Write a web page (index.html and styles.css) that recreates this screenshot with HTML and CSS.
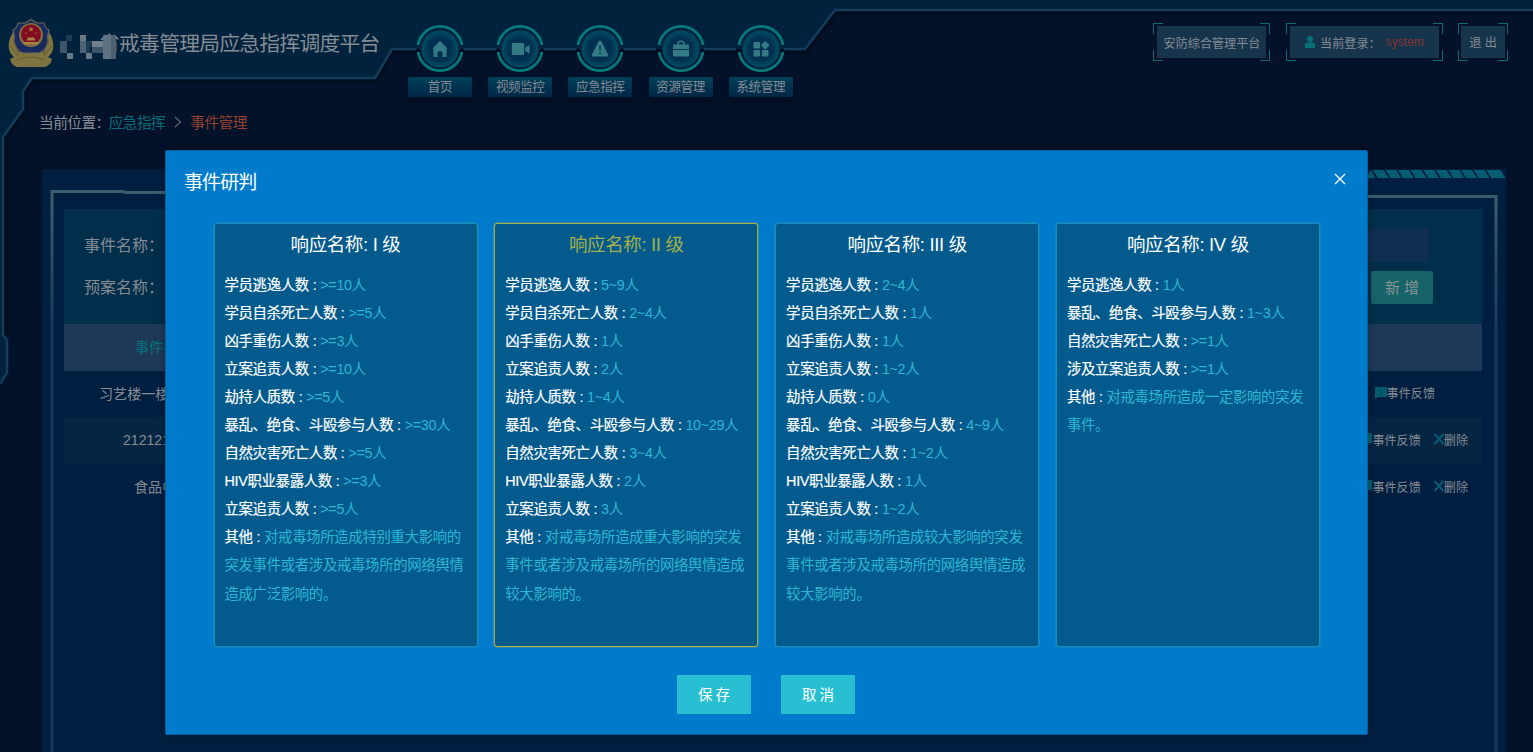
FILE: index.html
```
<!DOCTYPE html>
<html lang="zh-CN">
<head>
<meta charset="utf-8">
<title>事件管理</title>
<link rel="stylesheet" href="styles.css">
</head>
<body>
<div class="page">
  <svg class="backdrop" viewBox="0 0 1533 400" width="1533" height="400">
    <path class="backdrop-fill" d="M0 0H1533V10H835L805 49H392L375 78H32L23 91V109L3 137V335L7 340V373L0 384Z"/>
    <path class="backdrop-shadow" d="M1533 13H837L807 52H394L377 81H34L26 92V110L6 138V334"/>
    <path class="backdrop-line" d="M1533 10H835L805 49H784M736 49H704M656 49H624M576 49H544M496 49H464M416 49H392L375 78H32L23 91V109L3 137V335L7 340V373L0 384"/>
  </svg>

  <header class="header">
    <div class="brand">
      <svg class="emblem" viewBox="0 0 46 50" width="46" height="50">
        <path d="M5 14C-1 24 -1 34 6 39L2 41Q3 47 9 49H37Q43 47 44 41L40 39C47 34 47 24 41 14L36 34H10Z" fill="#7f7440"/>
        <path d="M23 1.500L29 5H36Q37 10 41 12Q39 18 40 23Q39 32 31 35H15Q7 32 6 23Q7 18 5 12Q9 10 10 5H17Z" fill="#172a60" stroke="#6a6858" stroke-width="1.200"/>
        <circle cx="23" cy="17" r="12" fill="#81703b"/>
        <circle cx="23" cy="16.500" r="10" fill="#840c20"/>
        <path d="M23 9l.8 1.500h1.700l-1.300 1.200.4 1.800-1.600-.9-1.600.9.4-1.800-1.300-1.200h1.700zM17.500 14.500h1.300v1.300h-1.300zM27.200 14.500h1.300v1.300h-1.300zM20 19.500h6l1.500 3h-9zM15.500 24h15v2.500h-15z" fill="#a18443"/>
        <path d="M5 21L11 36M41 21L35 36M2.500 28L10 38M43.500 28L36 38M9 42Q23 36 37 42" fill="none" stroke="#635b32" stroke-width="1"/>
      </svg>
      <div class="brand-title"><span class="masked">省<svg class="mosaic" viewBox="0 0 56 24" width="56" height="24">
        <path fill="#1d3d53" d="M6 0h6v6H6zM26 6h6v6h-6zM24 12h6v6h-6z"/>
        <path fill="#3d566a" d="M0 6h7v12H0zM32 12h12v6H32z"/>
        <path fill="#687985" d="M7 18h6v6H7zM26 18h6v6h-6zM20 0h6v6h-6z"/>
        <path fill="#4c6274" d="M20 6h6v12h-6zM50 0h6v24h-6z"/>
        <path fill="#71808c" d="M32 6h12v6H32z"/>
        <path fill="#5f7180" d="M43 0h8v24h-8z"/>
      </svg></span>戒毒管理局应急指挥调度平台</div>
    </div>
    <nav class="nav">
      <a class="nav-item"><svg class="nav-icon" viewBox="0 0 48 48"><use href="#ring"/><path d="M24 16L31.500 23.500H30.500V32H26.500V26.500H21.500V32H17.500V23.500H16.500Z"/></svg><span>首页</span></a>
      <a class="nav-item"><svg class="nav-icon" viewBox="0 0 48 48"><use href="#ring"/><path d="M17 18h10a1.200 1.200 0 0 1 1.200 1.200v9.600a1.200 1.200 0 0 1-1.200 1.200H17a1.200 1.200 0 0 1-1.200-1.200v-9.600A1.200 1.200 0 0 1 17 18zM29.200 22.500L33.500 20v8.500L29.200 26z"/></svg><span>视频监控</span></a>
      <a class="nav-item"><svg class="nav-icon" viewBox="0 0 48 48"><use href="#ring"/><path fill-rule="evenodd" d="M22.600 16.500q1.400-1.800 2.800 0L32 29.500q.8 2-1.200 2H17.200q-2 0-1.200-2zM23.200 20.500l.3 5.500h1l.3-5.500zM23.200 27.500v1.700h1.700v-1.700z"/></svg><span>应急指挥</span></a>
      <a class="nav-item"><svg class="nav-icon" viewBox="0 0 48 48"><use href="#ring"/><path fill-rule="evenodd" d="M20 19.500q0-4 4-4t4 4h3q1 0 1 1V24H16v-3.500q0-1 1-1zm1.500 0h5q0-2.500-2.500-2.500t-2.500 2.500zM16 25h16v5.500q0 1-1 1H17q-1 0-1-1z"/></svg><span>资源管理</span></a>
      <a class="nav-item"><svg class="nav-icon" viewBox="0 0 48 48"><use href="#ring"/><path d="M17.500 17h4.500q1 0 1 1v4.500q0 1-1 1h-4.500q-1 0-1-1V18q0-1 1-1zM17.500 25H22q1 0 1 1v4.500q0 1-1 1h-4.500q-1 0-1-1V26q0-1 1-1zM26 25h4.500q1 0 1 1v4.500q0 1-1 1H26q-1 0-1-1V26q0-1 1-1zM27.500 16.500q.7-.7 1.400 0l3 3q.7.7 0 1.400l-3 3q-.7.7-1.400 0l-3-3q-.7-.7 0-1.400z"/></svg><span>系统管理</span></a>
    </nav>
    <div class="tools">
      <div class="tool tool-platform"><i class="corners"></i><span>安防综合管理平台</span></div>
      <div class="tool tool-user"><i class="corners"></i><span><svg class="user-icon" viewBox="0 0 10 12" width="10" height="12"><circle cx="5" cy="3" r="3"/><path d="M0 12V9q0-2.500 3-2.500h4q3 0 3 2.500v3z"/></svg>当前登录：<em>system</em></span></div>
      <div class="tool tool-exit"><i class="corners"></i><span>退 出</span></div>
    </div>
  </header>

  <div class="crumbs">当前位置：<a>应急指挥</a><svg viewBox="0 0 8 12" width="8" height="12"><path d="M1 1L6.500 6L1 11"/></svg><b>事件管理</b></div>

  <main class="panel">
    <svg class="stripes" viewBox="0 0 140 8" width="140" height="8">
      <path d="M0 8L5 0L9 8ZM7 0h10.500l5 8h-10.500zM19.600 0h10.500l5 8h-10.500zM32.200 0h10.500l5 8h-10.500zM44.800 0h10.500l5 8h-10.500zM57.400 0h10.500l5 8h-10.500zM70 0h10.500l5 8h-10.500zM82.600 0h10.500l5 8h-10.500zM95.200 0h10.500l5 8h-10.500zM107.800 0h10.500l5 8h-10.500zM120.400 0h14l5 8h-14z"/>
    </svg>
    <svg class="frame" viewBox="0 0 1448 562" width="1448" height="562">
      <defs><linearGradient id="edge" gradientUnits="userSpaceOnUse" x1="0" y1="0" x2="0" y2="140"><stop offset="0" stop-color="#38616f"/><stop offset="1" stop-color="#123b57"/></linearGradient></defs>
      <path d="M2 562V1.500H72L76 2.500H400L410 6.500H1446V562"/>
    </svg>
    <section class="search">
      <div class="search-row"><label>事件名称：</label><div class="field"></div></div>
      <div class="search-row"><label>预案名称：</label><button class="add">新 增</button></div>
    </section>
    <div class="table">
      <div class="row row-head"><span class="cell cell-head">事件名</span></div>
      <div class="row row-first"><span class="cell cell-a">习艺楼一楼</span><span class="ops"><svg class="note" viewBox="0 0 12 12"><use href="#note"/></svg>事件反馈</span></div>
      <div class="row row-alt"><span class="cell cell-b">212121</span><span class="ops"><svg class="note" viewBox="0 0 12 12"><use href="#note"/></svg>事件反馈<svg class="cross" viewBox="0 0 10 12"><use href="#cross"/></svg>删除</span></div>
      <div class="row"><span class="cell cell-c">食品中</span><span class="ops"><svg class="note" viewBox="0 0 12 12"><use href="#note"/></svg>事件反馈<svg class="cross" viewBox="0 0 10 12"><use href="#cross"/></svg>删除</span></div>
    </div>
  </main>
</div>

<div class="modal">
  <div class="modal-head"><h2>事件研判</h2><svg viewBox="0 0 12 12" width="12" height="12"><path d="M1 1L11 11M11 1L1 11"/></svg></div>
  <div class="cards">
    <section class="card">
      <h3>响应名称: I 级</h3>
      <p><b>学员逃逸人数 : </b>&gt;=10人</p>
      <p><b>学员自杀死亡人数 : </b>&gt;=5人</p>
      <p><b>凶手重伤人数 : </b>&gt;=3人</p>
      <p><b>立案追责人数 : </b>&gt;=10人</p>
      <p><b>劫持人质数 : </b>&gt;=5人</p>
      <p><b>暴乱、绝食、斗殴参与人数 : </b>&gt;=30人</p>
      <p><b>自然灾害死亡人数 : </b>&gt;=5人</p>
      <p><b>HIV职业暴露人数 : </b>&gt;=3人</p>
      <p><b>立案追责人数 : </b>&gt;=5人</p>
      <p><b>其他 : </b>对戒毒场所造成特别重大影响的突发事件或者涉及戒毒场所的网络舆情造成广泛影响的。</p>
    </section>
    <section class="card card-active">
      <h3>响应名称: II 级</h3>
      <p><b>学员逃逸人数 : </b>5~9人</p>
      <p><b>学员自杀死亡人数 : </b>2~4人</p>
      <p><b>凶手重伤人数 : </b>1人</p>
      <p><b>立案追责人数 : </b>2人</p>
      <p><b>劫持人质数 : </b>1~4人</p>
      <p><b>暴乱、绝食、斗殴参与人数 : </b>10~29人</p>
      <p><b>自然灾害死亡人数 : </b>3~4人</p>
      <p><b>HIV职业暴露人数 : </b>2人</p>
      <p><b>立案追责人数 : </b>3人</p>
      <p><b>其他 : </b>对戒毒场所造成重大影响的突发事件或者涉及戒毒场所的网络舆情造成较大影响的。</p>
    </section>
    <section class="card">
      <h3>响应名称: III 级</h3>
      <p><b>学员逃逸人数 : </b>2~4人</p>
      <p><b>学员自杀死亡人数 : </b>1人</p>
      <p><b>凶手重伤人数 : </b>1人</p>
      <p><b>立案追责人数 : </b>1~2人</p>
      <p><b>劫持人质数 : </b>0人</p>
      <p><b>暴乱、绝食、斗殴参与人数 : </b>4~9人</p>
      <p><b>自然灾害死亡人数 : </b>1~2人</p>
      <p><b>HIV职业暴露人数 : </b>1人</p>
      <p><b>立案追责人数 : </b>1~2人</p>
      <p><b>其他 : </b>对戒毒场所造成较大影响的突发事件或者涉及戒毒场所的网络舆情造成较大影响的。</p>
    </section>
    <section class="card">
      <h3>响应名称: IV 级</h3>
      <p><b>学员逃逸人数 : </b>1人</p>
      <p><b>暴乱、绝食、斗殴参与人数 : </b>1~3人</p>
      <p><b>自然灾害死亡人数 : </b>&gt;=1人</p>
      <p><b>涉及立案追责人数 : </b>&gt;=1人</p>
      <p><b>其他 : </b>对戒毒场所造成一定影响的突发事件。</p>
    </section>
  </div>
  <div class="actions"><button>保存</button><button>取消</button></div>
</div>

<svg class="symbols" width="0" height="0">
  <defs>
    <radialGradient id="disc"><stop offset="0" stop-color="#003152"/><stop offset=".6" stop-color="#00304f"/><stop offset=".88" stop-color="#00475f"/><stop offset="1" stop-color="#023f59"/></radialGradient>
    <g id="ring">
      <circle cx="24" cy="24" r="19" fill="url(#disc)" stroke="#002b45" stroke-width="1"/>
      <path d="M2 20A22.300 22.300 0 0 1 46 20M2 27A22.300 22.300 0 0 0 46 27" fill="none" stroke="#04787b" stroke-width="2.700"/>
    </g>
    <g id="note"><path d="M0 0h12v10H3L0 12z" fill="#055b6c"/><path d="M5.500 2h1v4h-1zM5.500 7h1v1h-1z" fill="#033f58"/></g>
    <path id="cross" d="M.5 1L9.500 11M9.500 1L.5 11" fill="none" stroke="#045d70" stroke-width="2"/>
  </defs>
</svg>
</body>
</html>
```
FILE: styles.css
```
* { box-sizing: border-box; }
body {
  margin: 0;
  width: 1533px;
  height: 752px;
  overflow: hidden;
  background: #031229;
  font-family: "Liberation Sans", "Noto Sans CJK SC", sans-serif;
  color: #858b93;
}
h2, h3, p { margin: 0; font-weight: 400; }
b, em { font-weight: 400; font-style: normal; }
button { border: 0; padding: 0; font: inherit; }
.page { position: relative; height: 752px; display: flex; flex-direction: column; }
.symbols { position: absolute; }

.backdrop { position: absolute; left: 0; top: 0; }
.backdrop-fill { fill: #00223c; }
.backdrop-shadow { fill: none; stroke: #020d1e; stroke-width: 3; }
.backdrop-line { fill: none; stroke: #123e5c; stroke-width: 2.5; }

.header { position: relative; display: flex; height: 110px; flex: none; }
.brand { display: flex; width: 408px; padding: 18px 0 0 8px; }
.emblem { flex: none; }
.brand-title { margin-left: 45px; height: 52px; line-height: 52px; font-size: 20.8px; letter-spacing: -.75px; white-space: nowrap; }
.masked { position: relative; }
.mosaic { position: absolute; left: -39px; top: 3px; }
.nav { display: flex; gap: 16.2px; padding-top: 25px; width: 387px; }
.nav-item { width: 64px; display: flex; flex-direction: column; align-items: center; gap: 4px; }
.nav-icon { width: 48px; height: 48px; fill: #347b86; }
.nav-item span {
  width: 64px; height: 20px; line-height: 21px; text-align: center; font-size: 12.6px; letter-spacing: -.45px;
  border-radius: 2px; background: linear-gradient(#004059, #002746);
  box-shadow: 0 3px 8px #010e20;
}
.tools { display: flex; margin-left: 358px; padding-top: 23px; gap: 16px; font-size: 12.1px; }
.tool { position: relative; height: 38px; padding: 3px 4px; }
.tool > span { display: flex; align-items: center; justify-content: center; height: 32px; background: #17344d; white-space: nowrap; }
.tool-platform { width: 117px; }
.tool-platform > span { padding-left: 1px; }
.tool-user { width: 157px; }
.tool-exit { width: 50px; padding: 3px; margin-left: -1px; }
.tool-exit > span { padding-bottom: 2px; }
.corners {
  position: absolute; inset: 0;
  --c: linear-gradient(#056b71, #056b71);
  background: var(--c) 0 0 / 10px 1px, var(--c) 0 0 / 1px 11px, var(--c) 100% 0 / 10px 1px, var(--c) 100% 0 / 1px 11px,
    var(--c) 0 100% / 10px 1px, var(--c) 0 100% / 1px 11px, var(--c) 100% 100% / 10px 1px, var(--c) 100% 100% / 1px 11px;
  background-repeat: no-repeat;
}
.user-icon { fill: #047179; margin-right: 5px; }
.tool em { color: #80342f; margin-left: 5px; }

.crumbs { position: relative; display: flex; align-items: center; height: 26px; margin-top: -1px; padding: 0 0 1px 39px; font-size: 14.7px; letter-spacing: -.55px; }
.crumbs a { color: #076d78; margin-left: -1px; }
.crumbs svg { fill: none; stroke: #59636f; stroke-width: 1.3; margin: 0 8px 0 9px; }
.crumbs b { color: #934331; }

.panel { position: relative; width: 1464px; height: 583px; margin: 34px 0 0 42px; padding: 40px 23px 0 22px; background: #001f40; }
.stripes { position: absolute; right: 0; top: 1px; fill: #045d73; }
.frame { position: absolute; left: 8px; top: 21px; fill: none; stroke: url(#edge); stroke-width: 3; }
.search { height: 115px; padding: 20px 0 0 20px; background: #002e4b; font-size: 16px; position: relative; display: flex; flex-direction: column; gap: 9px; }
.search-row { display: flex; height: 33px; align-items: center; justify-content: space-between; padding-right: 55px; }
.search-row label { margin: -3px 0 0; }
.field { width: 120px; height: 33px; background: #102f50; }
.add { width: 62px; height: 33px; margin-right: -5px; padding-bottom: 2px; border-radius: 2px; background: #17636a; color: #8b9496; font-size: 15px; }
.row { position: relative; display: flex; justify-content: space-between; align-items: center; height: 46.6px; padding: 0 14px 2px 0; font-size: 14.1px; width: 1418px; }
.row-head { background: #1e3957; color: #08737d; }
.row-alt { background: #052543; }
.row-first { padding-right: 47px; }
.cell-head { margin-left: 71px; }
.cell-a { margin-left: 35px; }
.cell-b { margin-left: 59px; padding-top: 2px; }
.cell-c { margin-left: 70px; }
.ops { display: flex; align-items: center; font-size: 12.1px; }
.note { width: 12px; height: 12px; }
.cross { width: 10px; height: 12px; margin-left: 13px; }

.modal { position: absolute; left: 165px; top: 150px; width: 1203px; height: 585px; padding: 16px 48px 0; background: #007bcc; border: 1px solid #075f9b; border-radius: 2px; box-shadow: 0 0 8px rgba(0,0,0,.25); color: #fff; }
.modal-head { display: flex; justify-content: space-between; height: 56px; margin: 0 -29px 0 -30px; padding-right: 2px; }
.modal-head h2 { font-size: 19px; letter-spacing: -.9px; line-height: 31px; }
.modal-head svg { margin: 6px 0; stroke: #fff; stroke-width: 1.4; }
.cards { display: flex; gap: 16.8px; width: 1108px; margin-left: -.5px; }
.card { width: 264px; height: 424px; padding: 5px 10px; border: 1px solid #1d8db4; box-shadow: 0 0 0 .5px rgba(40,160,190,.5); border-radius: 3px; background: #035a8d; color: #2bb7d3; font-size: 14.4px; letter-spacing: -.33px; word-spacing: .2px; }
.card h3 { color: #fff; text-align: center; font-size: 18.5px; letter-spacing: -.4px; line-height: 31px; margin-bottom: 11px; }
.card p { line-height: 28.05px; word-break: break-all; }
.card b { color: #fff; -webkit-text-stroke: .2px #fff; }
.card-active { border-color: #a8ad4d; box-shadow: 0 0 0 .5px rgba(168,173,77,.6); }
.card-active h3 { color: #a6b14a; }
.actions { display: flex; justify-content: center; gap: 29.5px; margin: 28px 1px 0 0; }
.actions button { width: 74.500px; height: 39px; padding: 0 0 3px 3px; background: #29bfd3; color: #fff; font-size: 14.500px; letter-spacing: 3px; }
```
